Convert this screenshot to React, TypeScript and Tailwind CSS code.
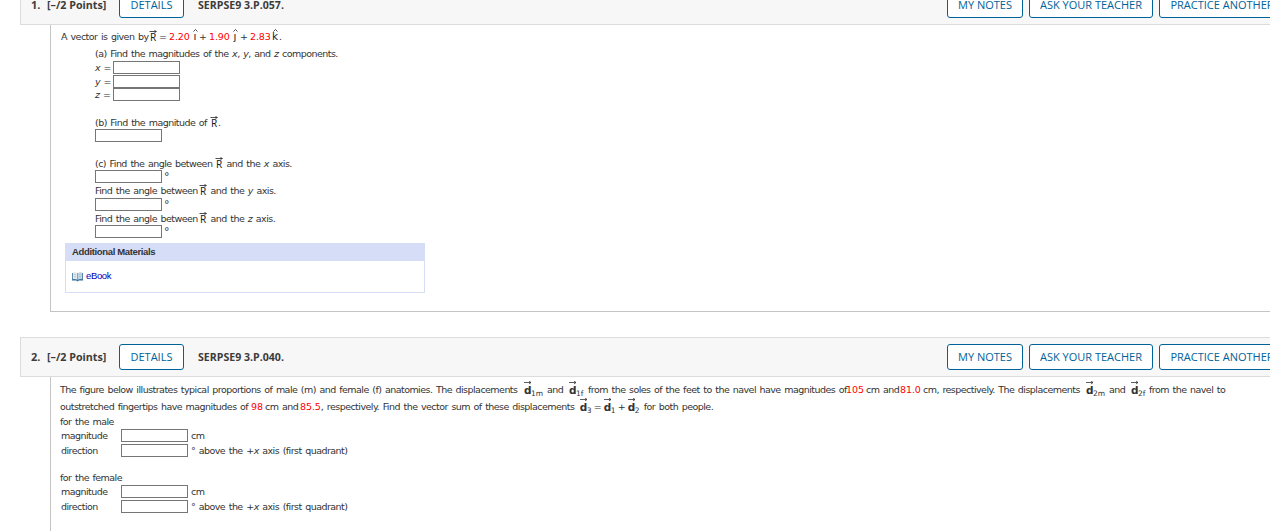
import type { ReactNode } from 'react';

function OutlineButton({ children, className = '' }: { children: ReactNode; className?: string }) {
  return (
    <button
      className={`flex h-[26px] shrink-0 items-center justify-center whitespace-nowrap rounded-[3px] border border-[#00629b] bg-white font-['Open_Sans',sans-serif] text-[11px] font-medium text-[#00629b] ${className}`}
    >
      {children}
    </button>
  );
}

function T({ children, className = '' }: { children: ReactNode; className?: string }) {
  return <span className={`shrink-0 whitespace-pre ${className}`}>{children}</span>;
}

function Num({ children, className = '' }: { children: ReactNode; className?: string }) {
  return <span className={`shrink-0 whitespace-pre tracking-[-0.1px] text-[#ff0000] ${className}`}>{children}</span>;
}

function VecR({ className = '' }: { className?: string }) {
  return (
    <span className={`relative -mt-[5px] h-[14px] w-2 shrink-0 text-center font-['Noto_Sans',sans-serif] text-[10px] leading-[18px] tracking-normal text-[#222] ${className}`}>
      R
      <svg className="absolute left-0 top-[2px]" width="8" height="4" viewBox="0 0 8 4" fill="none" stroke="#222">
        <path d="M0.5 1.5h7M5.5 0l1.5 1.5L5.5 3" strokeWidth="0.8" />
      </svg>
    </span>
  );
}

function Hat({ children, className = '' }: { children: ReactNode; className?: string }) {
  return (
    <span className={`relative -mt-1 h-[14px] w-2 shrink-0 text-center text-[10.5px] leading-[17px] tracking-normal text-[#222] ${className}`}>
      {children}
      <svg className="absolute left-[2px] top-[1px]" width="5" height="3" viewBox="0 0 5 3" fill="none" stroke="#222">
        <path d="M0.5 2.5l2-2 2 2" strokeWidth="0.8" />
      </svg>
    </span>
  );
}

function VecD({ sub, className = '' }: { sub: string; className?: string }) {
  return (
    <span className={`relative -mt-[3px] flex h-[16px] shrink-0 tracking-normal text-[#333] ${className}`}>
      <b className="w-[7px] text-[10.5px] leading-[18px]">d</b>
      <span className="text-[7.5px] leading-[26px]">{sub}</span>
      <svg className="absolute left-0 top-0" width="8" height="4" viewBox="0 0 8 4" fill="none" stroke="#333">
        <path d="M0 1.5h7M5 0L7 1.5 5 3" strokeWidth="0.8" />
      </svg>
    </span>
  );
}

function Blank({ className = '' }: { className?: string }) {
  return <input className={`block h-[13px] w-[67px] shrink-0 border border-[#767676] bg-white ${className}`} />;
}

function QuestionHeader({ number, code }: { number: string; code: string }) {
  return (
    <div className="ml-5 flex h-10 items-center border border-r-0 border-[#dcdcdc] bg-[#f7f7f7] pl-[10px] font-['Open_Sans',sans-serif] text-[11px] font-bold tracking-normal text-[#3c3c3c] [word-spacing:0]">
      <span className="w-4 shrink-0">{number}</span>
      <span className="w-[72px] shrink-0 whitespace-nowrap text-[10.7px]">[–/2 Points]</span>
      <OutlineButton className="w-[65px]">DETAILS</OutlineButton>
      <span className="ml-[14px] w-[749px] shrink-0 pt-px text-[10.6px]">{code}</span>
      <div className="flex gap-[6px]">
        <OutlineButton className="w-[76px]">MY NOTES</OutlineButton>
        <OutlineButton className="w-[124px]">ASK YOUR TEACHER</OutlineButton>
        <OutlineButton className="w-[126px]">PRACTICE ANOTHER</OutlineButton>
      </div>
    </div>
  );
}

function BookIcon() {
  return (
    <svg width="11" height="10" viewBox="0 0 11 10">
      <path d="M0 1h11v7.5H7L5.5 9.5 4 8.5H0z" fill="#3d739e" />
      <path d="M0.8 0.5C2.7 0 4.2 0.2 5.3 1V7.8C4 6.8 2.5 6.8 0.8 7.2z" fill="#dfe8ef" />
      <path d="M10.2 0.5C8.3 0 6.8 0.2 5.7 1V7.8C7 6.8 8.5 6.8 10.2 7.2z" fill="#c3d3df" />
      <path d="M2 2.5h2M2 4.5h2M7 2.5h2M7 4.5h2" stroke="#9fb4c4" strokeWidth="0.5" />
    </svg>
  );
}

function PersonAnswers({ who }: { who: string }) {
  return (
    <>
      <div className="flex h-[14px] items-center">{who}</div>
      <div className="flex h-[15px] pl-px">
        <T className="w-[60px] leading-[14px]">magnitude</T>
        <Blank />
        <T className="ml-[3px] leading-[14px]">cm</T>
      </div>
      <div className="flex h-[15px] pl-px">
        <T className="w-[60px] leading-[14px]">direction</T>
        <Blank />
        <T className="ml-[3px] leading-[14px]">° above the +<i>x</i> axis (first quadrant)</T>
      </div>
    </>
  );
}

const ANGLES = [
  { prefix: '(c) Find the angle between ', axis: 'x', width: 'w-[120px]', row: 'h-[15px] pt-[3px]' },
  { prefix: 'Find the angle between ', axis: 'y', width: 'w-[104px]', row: 'h-[14px]' },
  { prefix: 'Find the angle between ', axis: 'z', width: 'w-[104px]', row: 'h-[13px] pt-px' },
];

export default function App() {
  return (
    <div className="h-[531px] w-[1270px] overflow-hidden bg-white font-['DejaVu_Sans',sans-serif] text-[9.5px] tracking-[-0.54px] text-[#333] [word-spacing:1.05px]">
      <div className="-mt-[15px]">
        <QuestionHeader number="1." code="SERPSE9 3.P.057." />
      </div>
      <section className="ml-[50px] h-[287px] border-b border-l border-[#c4c4c4] pt-[2px]">
        <div className="flex h-[18px] items-center pl-[10px] pt-[2px]">
          <T className="w-[88px]">A vector is given by</T>
          <VecR />
          <T className="ml-[2px] w-[10px]">=</T>
          <Num className="w-[22px]">2.20</Num>
          <Hat>ı</Hat>
          <T className="w-[9px]">+</T>
          <Num className="ml-px w-[22px]">1.90</Num>
          <Hat>ȷ</Hat>
          <T className="ml-px w-[10px]">+</T>
          <Num className="w-[21px]">2.83</Num>
          <Hat>k</Hat>
          <T>.</T>
        </div>
        <div className="pl-[44px]">
          <div className="flex h-4 items-center pt-[2px]">
            <T>(a) Find the magnitudes of the <i>x</i>, <i>y</i>, and <i>z</i> components.</T>
          </div>
          <div className="flex h-[14px]">
            <T className="w-[18px] leading-[14px]"><i>x</i> =</T>
            <Blank />
          </div>
          <div className="flex h-[13px]">
            <T className="w-[18px] leading-[14px]"><i>y</i> =</T>
            <Blank />
          </div>
          <div className="flex h-[13px]">
            <T className="w-[18px] leading-[14px]"><i>z</i> =</T>
            <Blank />
          </div>

          <div className="mt-3 flex h-4 items-center pt-[4px]">
            <T className="w-[115px]">(b) Find the magnitude of</T>
            <VecR />
            <T>.</T>
          </div>
          <Blank />

          <div className="mt-[13px]">
            {ANGLES.map((a) => (
              <div key={a.axis}>
                <div className={`flex items-center ${a.row}`}>
                  <T className={a.width}>{a.prefix}</T>
                  <VecR />
                  <T> and the <i>{a.axis}</i> axis.</T>
                </div>
                <div className="flex h-[14px]">
                  <Blank />
                  <T className="ml-[2px] text-[11px] leading-[14px]">°</T>
                </div>
              </div>
            ))}
          </div>
        </div>

        <div className="ml-[14px] mt-1 h-[50px] w-[360px] border border-[#d6def7] tracking-[-0.35px] [word-spacing:0]">
          <h4 className="flex h-[17px] items-center bg-[#d6def7] pl-[6px] font-['Liberation_Sans',sans-serif] text-[9.5px] font-bold">
            Additional Materials
          </h4>
          <a className="flex h-[31px] items-center gap-[3px] pl-[6px] font-['Liberation_Sans',sans-serif] text-[9.5px] text-[#0000b8]">
            <BookIcon />
            eBook
          </a>
        </div>
      </section>

      <div className="mt-[25px]">
        <QuestionHeader number="2." code="SERPSE9 3.P.040." />
      </div>
      <section className="ml-[50px] h-[154px] border-l border-[#c4c4c4] pl-[9px] pt-1">
        <div className="flex h-[17px] items-center pt-[2px]">
          <T className="w-[464px]">The figure below illustrates typical proportions of male (m) and female (f) anatomies. The displacements</T>
          <VecD sub="1m" className="w-[23px]" />
          <T className="w-[22px]">and</T>
          <VecD sub="1f" className="w-[19px]" />
          <T className="w-[258px]">from the soles of the feet to the navel have magnitudes of</T>
          <Num className="w-[20px]">105</Num>
          <T className="w-[34px]">cm and</T>
          <Num className="w-[23px]">81.0</Num>
          <T className="w-[163px]">cm, respectively. The displacements</T>
          <VecD sub="2m" className="w-[23px]" />
          <T className="w-[22px]">and</T>
          <VecD sub="2f" className="w-[18px]" />
          <T>from the navel to</T>
        </div>
        <div className="flex h-[17px] items-center pt-[2px]">
          <T className="w-[191px]">outstretched fingertips have magnitudes of</T>
          <Num className="w-[14px]">98</Num>
          <T className="w-[35px]">cm and</T>
          <Num>85.5</Num>
          <T className="w-[259px]">, respectively. Find the vector sum of these displacements</T>
          <VecD sub="3" className="w-[14px]" />
          <T className="w-[10px]">=</T>
          <VecD sub="1" className="w-[14px]" />
          <T className="w-[10px]">+</T>
          <VecD sub="2" className="w-[16px]" />
          <T>for both people.</T>
        </div>
        <PersonAnswers who="for the male" />
        <div className="h-3" />
        <PersonAnswers who="for the female" />
      </section>
    </div>
  );
}
